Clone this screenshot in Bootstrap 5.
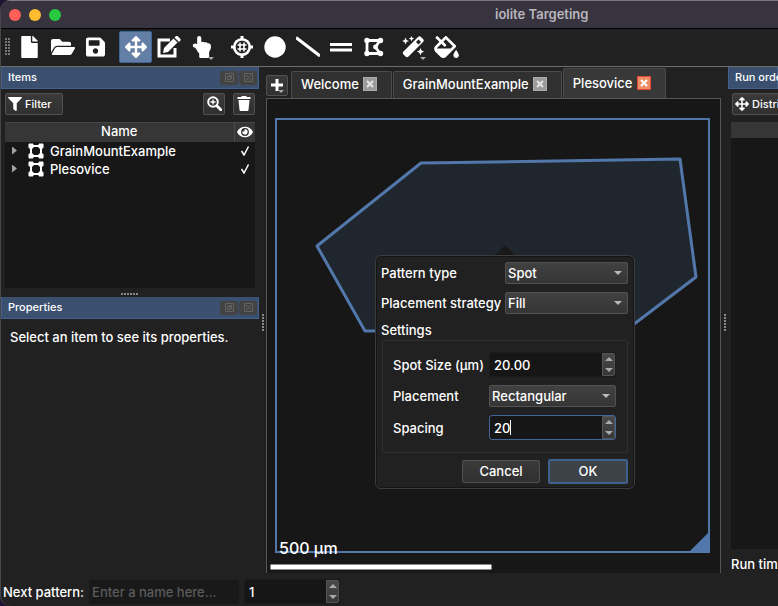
<!DOCTYPE html>
<html lang="en" data-bs-theme="dark">
<head>
<meta charset="utf-8">
<meta name="viewport" content="width=device-width, initial-scale=1">
<title>iolite Targeting</title>
<link href="https://cdn.jsdelivr.net/npm/bootstrap@5.3.0/dist/css/bootstrap.min.css" rel="stylesheet">
<style>
  :root { --face: #212121; --well: #171717; --edge: #565656; --accent: #5277aa; --dock: #3a506e; }
  html, body { height: 100%; }
  body { background: #1d1433; color: #fff; font: 500 13px/18px Inter, "Liberation Sans", sans-serif; overflow: hidden; }
  svg { display: block; flex: none; }
  main, .min-0 { min-width: 0; min-height: 0; }
  .ico { fill: #fff; }
  .window { background: var(--face); border-left: 1px solid #47474a; border-radius: 10px 0 0 10px; overflow: hidden; }
  .titlebar { height: 29px; flex: none; background: #37343f; border-top: 1px solid #7b797f; border-bottom: 1px solid #000; padding-left: 8px; }
  .titlebar h1 { font-size: 13px; font-weight: 600; color: #b9b7bd; line-height: 18px; padding: 0 0 1px 434px; margin: 0; white-space: nowrap; }
  .light { width: 12px; height: 12px; border: 0; border-radius: 50%; padding: 0; }
  .light-r { background: #ff5f57; } .light-y { background: #febc2e; } .light-g { background: #28c840; }
  .toolbar { height: 38px; flex: none; border-bottom: 1px solid #6d6d6d; padding: 0 0 2px 4px; }
  .grip { width: 6px; height: 18px; margin-right: 2px; background: radial-gradient(circle at 1px 1px, #777 1px, transparent 1px) 0 0 / 3px 3px; }
  .tool { position: relative; width: 33px; height: 32px; padding: 0; border: 1px solid transparent; border-radius: 2px; background: none; display: flex; align-items: center; justify-content: center; }
  .tool.on { background: #647fa6; border-color: #3f6699; }
  .rule { width: 7px; height: 24px; }
  .drop::after { content: ""; position: absolute; right: 3px; bottom: 2px; border: 3px solid transparent; border-top-color: #aaa; border-bottom: 0; }
  .dock-left { width: 258px; flex: none; }
  .dock-right { width: 50px; flex: none; overflow: hidden; white-space: nowrap; }
  .dock-head { height: 22px; flex: none; background: var(--dock); border: 1px solid #41608d; border-top: 0; padding: 0 1px 0 6px; gap: 1px; }
  .dock-head h2 { font-size: 11px; line-height: 18px; font-weight: 500; margin: 0; padding-bottom: 1px; }
  .dock-btn { width: 18px; height: 14px; background: #434343; border: 0; border-radius: 3px; padding: 0; display: grid; place-items: center; }
  .dock-btn svg { fill: none; stroke: #626262; }
  .dock-bar { padding: 4px 4px 7px; }
  .hint { margin: 9px 0 0 9px; }
  .face-btn { position: relative; height: 22px; background: linear-gradient(#3a3a3a, #303030); border: 1px solid #515151; border-radius: 2px; color: #fff; font-size: 11px; line-height: 18px; font-weight: 500; padding: 0 0 1px; display: flex; align-items: center; justify-content: center; gap: 3px; }
  .w-filter { width: 58px; padding-left: 2px; justify-content: flex-start; }
  .w-icon { width: 22px; }
  .w-dist { width: 80px; padding-left: 2px; justify-content: flex-start; }
  .well { background: var(--well); }
  .items { height: 166px; flex: none; }
  .items table { width: 100%; table-layout: fixed; }
  .items th { height: 19px; line-height: 17px; padding: 0 0 1px; background: #363636; font-weight: 500; text-align: center; border-right: 1px solid #4a4a4a; border-top: 1px solid #454545; }
  .items th:last-child { width: 21px; border-right: 0; }
  .items th svg { margin: auto; }
  .items td { height: 18px; line-height: 18px; padding: 0; }
  .item-icon { margin-right: 6px; }
  .twist { width: 5px; height: 8px; background: #a3a3a3; clip-path: polygon(0 0, 100% 50%, 0 100%); margin: 0 11px 0 7px; }
  .split-h { height: 9px; flex: none; padding-top: 3px; }
  .dots-h { width: 18px; height: 3px; background: radial-gradient(circle at 1px 1px, #888 1px, transparent 1px) 0 0 / 3px 3px; }
  .split-v { width: 7px; flex: none; padding: 6px 0 0 2px; }
  .dots-v { width: 3px; height: 18px; background: radial-gradient(circle at 1px 1px, #888 1px, transparent 1px) 0 0 / 3px 3px; }
  .tabs { height: 31px; flex: none; }
  .add-tab { height: 21px; margin: 0 3px 2px 0; }
  .tab { height: 27px; background: #303030; border: 1px solid #4b4b4b; border-bottom: 0; border-radius: 2px 2px 0 0; padding: 0 14px 2px 9px; margin-right: 1px; gap: 4px; }
  .tab.on { height: 30px; background: #383838; }
  .tab button.name { background: none; border: 0; color: #fff; padding: 0; font-weight: 500; }
  .shut { width: 14px; height: 14px; padding: 0; border: 1px solid #aaa; background: #9b9b9b; display: grid; place-items: center; }
  .shut svg { stroke: #e4e4e4; stroke-width: 2; }
  .tab.on .shut { background: #ee8c65; border-color: #e0492f; }
  .tab.on .shut svg { stroke: #fff; }
  .stage { position: relative; background: var(--well); border: 1px solid var(--edge); border-bottom: 0; }
  .stage > svg { width: 100%; height: 100%; }
  .popup { position: absolute; left: 108px; top: 156px; width: 260px; background: var(--face); border: 1px solid #3c3c3c; border-radius: 6px; padding: 6px 6px 4px 5px; box-shadow: inset 0 0 0 1px #141414; }
  .beak { position: absolute; left: 119px; top: -11px; width: 20px; height: 10px; background: #191919; clip-path: polygon(50% 0, 100% 100%, 0 100%); }
  .popup .form-select { height: 22px; color: #fff; font: inherit; line-height: 18px; padding: 0 20px 1px 2px; border: 1px solid #535353; border-radius: 2px; background: linear-gradient(#414141, #353535); appearance: none; }
  .pick { position: relative; }
  .pick::after { content: ""; position: absolute; right: 6px; top: 9px; border: 4px solid transparent; border-top-color: #bbb; border-bottom: 0; pointer-events: none; }
  .w-pick { width: 123px; } .w-field { width: 127px; }
  .line { height: 30px; }
  .line label { line-height: 22px; }
  .group-name { line-height: 16px; }
  .settings { border: 1px solid #303030; border-radius: 2px; padding: 11px 11px 12px 10px; margin: 2px 0 0 1px; }
  .actions { margin-top: 6px; }
  .spin { position: relative; display: flex; height: 25px; background: #161616; border: 1px solid #1b1b1b; border-radius: 3px; }
  .spin.on { border-color: #41659a; }
  .spin .form-control, .name-box { min-width: 0; border: 0; border-radius: 2px; background: transparent; color: #fff; font: inherit; padding: 1px 4px 0; }
  .spin-btns { width: 13px; flex: none; background: linear-gradient(#484848, #383838); border: 1px solid #555; border-radius: 0 2px 2px 0; display: flex; flex-direction: column; }
  .spin-btns button { flex: 1; padding: 0; border: 0; background: none; display: grid; place-items: center; }
  .spin-btns button::after { content: ""; border: 4px solid transparent; border-bottom-color: #aaa; border-top: 0; }
  .spin-btns button + button::after { border-top: 4px solid #aaa; border-bottom: 0; }
  .caret { position: absolute; left: 20px; top: 4px; width: 1px; height: 15px; background: #fff; }
  .act { height: 23px; width: 78px; font-size: 13px; }
  .act.ok { border: 2px solid #40608e; background: #3d4148; height: 25px; width: 80px; }
  .footer-row { height: 33px; flex: none; padding: 4px 0 0 2px; gap: 5px; }
  .name-box { width: 150px; height: 24px; background: #191919; padding: 0 3px; }
  .name-box::placeholder { color: #5b5b5b; }
  .w-count { width: 96px; }
  .right-well { margin-left: 3px; border-top: 16px solid #363636; }
  .run-time { padding: 6px 0 0 3px; }
</style>
<script src="https://cdn.jsdelivr.net/npm/bootstrap@5.3.0/dist/js/bootstrap.bundle.min.js"></script>
</head>
<body>
<svg width="0" height="0" class="position-absolute" aria-hidden="true">
  <defs>
    <symbol id="move" viewBox="0 0 512 512"><path d="M352.201 425.775l-79.196 79.196c-9.373 9.373-24.568 9.373-33.941 0l-79.196-79.196c-15.119-15.119-4.411-40.971 16.971-40.970h51.162L228 284H127.196v51.162c0 21.382-25.851 32.090-40.971 16.971L7.029 272.937c-9.373-9.373-9.373-24.569 0-33.941L86.225 159.800c15.119-15.119 40.971-4.411 40.971 16.971V228H228V127.196h-51.230c-21.382 0-32.090-25.851-16.971-40.971l79.196-79.196c9.373-9.373 24.568-9.373 33.941 0l79.196 79.196c15.119 15.119 4.411 40.971-16.971 40.971h-51.162V228h100.804v-51.162c0-21.382 25.851-32.090 40.970-16.971l79.196 79.196c9.373 9.373 9.373 24.569 0 33.941L425.773 352.200c-15.119 15.119-40.971 4.411-40.970-16.971V284H284v100.804h51.230c21.382 0 32.090 25.851 16.971 40.971z"/></symbol>
    <symbol id="square-poly" viewBox="0 0 16 16"><path d="M3 3h10v10H3z" fill="none" stroke="#fff" stroke-width="2"/><path d="M1 1h4v4H1zM11 1h4v4h-4zM1 11h4v4H1zM11 11h4v4h-4z" stroke="#fff" stroke-linejoin="round"/></symbol>
    <symbol id="float" viewBox="0 0 9 9"><path d="M.5 .5h8v8h-8zM2.500 3.500h3v3h-3zM3.500 2.500h3v3"/></symbol>
    <symbol id="cross" viewBox="0 0 9 9"><path d="M.5 .5h8v8h-8zM2 2l5 5M7 2l-5 5"/></symbol>
    <symbol id="x" viewBox="0 0 8 8"><path d="M1 1l6 6M7 1l-6 6"/></symbol>
  </defs>
</svg>
<div class="window d-flex flex-column vh-100">
  <header class="titlebar d-flex align-items-center">
    <div class="d-flex gap-2">
      <button class="light light-r" aria-label="Close"></button>
      <button class="light light-y" aria-label="Minimize"></button>
      <button class="light light-g" aria-label="Zoom"></button>
    </div>
    <h1>iolite Targeting</h1>
  </header>

  <div class="toolbar d-flex align-items-center" role="toolbar" aria-label="Tools">
    <span class="grip"></span>
    <button class="tool" aria-label="New"><svg class="ico" width="17" height="22" viewBox="0 0 384 512"><path d="M224 136V0H24C10.700 0 0 10.700 0 24v464c0 13.300 10.700 24 24 24h336c13.300 0 24-10.700 24-24V160H248c-13.200 0-24-10.800-24-24zm160-14.100v6.100H256V0h6.100c6.400 0 12.500 2.500 17 7l97.900 98c4.500 4.500 7 10.600 7 16.900z"/></svg></button>
    <button class="tool" aria-label="Open"><svg class="ico" width="24" height="22" viewBox="0 0 576 512"><path d="M572.694 292.093L500.270 416.248A63.997 63.997 0 0 1 444.989 448H45.025c-18.523 0-30.064-20.093-20.731-36.093l72.424-124.155A64 64 0 0 1 152 256h399.964c18.523 0 30.064 20.093 20.730 36.093zM152 224h328v-48c0-26.510-21.490-48-48-48H272l-64-64H48C21.490 64 0 85.490 0 112v278.046l69.077-118.418C86.214 242.250 117.989 224 152 224z"/></svg></button>
    <button class="tool" aria-label="Save"><svg class="ico" width="19" height="22" viewBox="0 0 448 512"><path d="M433.941 129.941l-83.882-83.882A48 48 0 0 0 316.118 32H48C21.490 32 0 53.490 0 80v352c0 26.510 21.490 48 48 48h352c26.510 0 48-21.490 48-48V163.882a48 48 0 0 0-14.059-33.941zM224 416c-35.346 0-64-28.654-64-64 0-35.346 28.654-64 64-64s64 28.654 64 64c0 35.346-28.654 64-64 64zm96-304.520V212c0 6.627-5.373 12-12 12H76c-6.627 0-12-5.373-12-12V108c0-6.627 5.373-12 12-12h228.520c3.183 0 6.235 1.264 8.485 3.515l3.480 3.480A11.996 11.996 0 0 1 320 111.480z"/></svg></button>
    <span class="rule"></span>
    <button class="tool on" aria-label="Move" aria-pressed="true"><svg class="ico" width="22" height="22"><use href="#move"/></svg></button>
    <button class="tool" aria-label="Edit"><svg class="ico" width="24" height="22" viewBox="0 0 24 22"><path d="M13 4H2v16h16v-8" fill="none" stroke="#fff" stroke-width="3"/><path d="M7 12L16.500 2.500l4 4L11 16l-5 1z"/><path d="M17.500 1.500l1-1a1.800 1.800 0 0 1 2.600 0l1.900 1.900a1.800 1.800 0 0 1 0 2.600l-1 1z"/></svg></button>
    <button class="tool drop" aria-label="Select"><svg class="ico" width="20" height="22" viewBox="0 0 448 512"><path transform="translate(10 0) scale(1.100 1)" d="M135.652 0c23.625 0 43.826 20.650 43.826 44.800v99.851c17.048-16.340 49.766-18.346 70.944 6.299 22.829-14.288 53.017-2.147 62.315 16.450C361.878 158.426 384 189.346 384 240c0 2.746-.203 13.276-.195 16 .168 61.971-31.065 76.894-38.315 123.731V480q0 32-24 32H160q-24 0-24-32v-75L106.415 371.534C93.421 342.648 57.377 276.122 29.092 264 10.897 256.203.008 242.616 0 224c-.014-34.222 35.098-57.752 66.908-44.119 8.359 3.583 16.670 8.312 24.918 14.153V44.800c0-23.450 20.543-44.800 43.826-44.800z"/></svg></button>
    <span class="rule"></span>
    <button class="tool" aria-label="Spot"><svg width="22" height="22" viewBox="0 0 22 22" fill="none" stroke="#fff"><circle cx="11" cy="11" r="7.800" stroke-width="2.600"/><path d="M11 0v4.500M11 17.500V22M0 11h4.500M17.500 11H22" stroke-width="3"/><path d="M9 6.500v9M13 6.500v9M6.500 9h9M6.500 13h9" stroke-width="1.600"/></svg></button>
    <button class="tool" aria-label="Circle"><svg class="ico" width="22" height="22" viewBox="0 0 22 22"><circle cx="11" cy="11" r="10.700"/></svg></button>
    <button class="tool" aria-label="Line"><svg width="24" height="22" viewBox="0 0 24 22" stroke="#fff" stroke-width="3"><path d="M0 1.500L24 20"/></svg></button>
    <button class="tool" aria-label="Band"><svg width="22" height="22" viewBox="0 0 22 22" stroke="#fff" stroke-width="3"><path d="M0 8.500h22M0 14h22"/></svg></button>
    <button class="tool" aria-label="Polygon"><svg class="ico" width="20" height="22" viewBox="0 0 20 22"><path d="M3 4.500h13l-4.500 6.500 4.500 6.500H3z" fill="none" stroke="#fff" stroke-width="2.800"/><circle cx="3" cy="4.500" r="2.700"/><circle cx="16.500" cy="4.500" r="2.700"/><circle cx="11.500" cy="11" r="2.400"/><circle cx="3" cy="17.500" r="2.700"/><circle cx="16.500" cy="17.500" r="2.700"/></svg></button>
    <span class="rule"></span>
    <button class="tool drop" aria-label="Magic"><svg class="ico" width="23" height="22" viewBox="0 0 23 22"><path d="M1.500 15.500L16 1q1.500-1.500 3 0l2 2q1.500 1.500 0 3L6.500 20.500q-1.500 1.500-3 0l-2-2q-1.500-1.500 0-3z"/><path d="M14 6l2.500 2.500 2.500-2.500-2.500-2.500z" fill="#212121"/><path d="M3.500 1.500l1 2.500 2.500 1L4.500 6l-1 2.500-1-2.500L0 5l2.500-1zM9.500 0l.8 1.800 1.800.8-1.800.8-.8 1.800-.8-1.800-1.800-.8 1.800-.8zM18.500 12l1.100 2.500 2.500 1.100-2.500 1.100-1.100 2.500-1.100-2.500-2.500-1.100 2.500-1.100z"/></svg></button>
    <button class="tool" aria-label="Fill"><svg class="ico" width="25" height="22" viewBox="0 0 576 512"><path d="M512 320s-64 92.650-64 128c0 35.350 28.660 64 64 64s64-28.650 64-64-64-128-64-128zm-9.370-102.940L294.940 9.370C288.690 3.120 280.500 0 272.310 0s-16.380 3.120-22.620 9.370l-81.580 81.580L81.930 4.760c-6.250-6.250-16.380-6.250-22.620 0L36.690 27.380c-6.240 6.250-6.240 16.380 0 22.620l86.190 86.180-94.760 94.760c-37.490 37.480-37.490 98.260 0 135.750l117.190 117.190c18.740 18.740 43.310 28.120 67.870 28.120 24.570 0 49.130-9.370 67.870-28.120l221.570-221.570c12.500-12.500 12.500-32.750.01-45.250zm-116.220 70.970H65.930c1.360-3.840 3.570-7.980 7.430-11.830l13.150-13.150 81.610-81.610 58.600 58.600c12.490 12.490 32.750 12.490 45.240 0s12.490-32.750 0-45.240l-58.600-58.600 58.950-58.950 162.440 162.440-48.340 48.340z"/></svg></button>
  </div>

  <main class="d-flex flex-grow-1">
    <aside class="dock-left d-flex flex-column">
      <div class="dock-head d-flex align-items-center">
        <h2 class="flex-grow-1">Items</h2>
        <button class="dock-btn" aria-label="Float items"><svg width="9" height="9"><use href="#float"/></svg></button>
        <button class="dock-btn" aria-label="Close items"><svg width="9" height="9"><use href="#cross"/></svg></button>
      </div>
      <div class="dock-bar d-flex">
        <button class="face-btn w-filter me-auto"><svg class="ico" width="14" height="14" viewBox="0 0 512 512"><path d="M487.976 0H24.028C2.710 0-8.047 25.866 7.058 40.971L192 225.941V432c0 7.831 3.821 15.170 10.237 19.662l80 55.980C298.020 518.690 320 507.493 320 487.980V225.941l184.947-184.970C520.021 25.896 509.338 0 487.976 0z"/></svg>Filter</button>
        <button class="face-btn w-icon me-2" aria-label="Zoom to item"><svg width="15" height="15" viewBox="0 0 15 15" fill="none" stroke="#fff"><circle cx="6" cy="6" r="4.800" stroke-width="2"/><path d="M9.800 9.800l4 4" stroke-width="2.800" stroke-linecap="round"/><path d="M6 3.500v5M3.500 6h5" stroke-width="1.400"/></svg></button>
        <button class="face-btn w-icon" aria-label="Delete item"><svg class="ico" width="14" height="15" viewBox="0 0 14 15"><path d="M.5 1H4l1-1h4l1 1h3.500v2H.5zM1.500 4h11l-1 10q-.1 1-1 1h-7q-.9 0-1-1z"/></svg></button>
      </div>
      <div class="items well mx-1">
        <table>
          <thead><tr><th>Name</th><th aria-label="Visible"><svg class="ico" width="16" height="14" viewBox="0 0 576 512"><path d="M572.520 241.400C518.290 135.590 410.930 64 288 64S57.680 135.640 3.480 241.410a32.350 32.350 0 0 0 0 29.190C57.710 376.410 165.070 448 288 448s230.320-71.640 284.520-177.410a32.350 32.350 0 0 0 0-29.190zM288 400a144 144 0 1 1 144-144 143.930 143.930 0 0 1-144 144zm0-240a95.310 95.310 0 0 0-25.310 3.790 47.850 47.850 0 0 1-66.900 66.900A95.780 95.780 0 1 0 288 160z"/></svg></th></tr></thead>
          <tbody>
            <tr><td><div class="d-flex align-items-center"><span class="twist"></span><svg class="ico item-icon" width="16" height="16"><use href="#square-poly"/></svg>GrainMountExample</div></td><td><svg class="m-auto" width="10" height="10" viewBox="0 0 10 10" fill="none" stroke="#fff" stroke-width="1.500"><path d="M1.500 5l2.500 4L8.500.5"/></svg></td></tr>
            <tr><td><div class="d-flex align-items-center"><span class="twist"></span><svg class="ico item-icon" width="16" height="16"><use href="#square-poly"/></svg>Plesovice</div></td><td><svg class="m-auto" width="10" height="10" viewBox="0 0 10 10" fill="none" stroke="#fff" stroke-width="1.500"><path d="M1.500 5l2.500 4L8.500.5"/></svg></td></tr>
          </tbody>
        </table>
      </div>
      <div class="split-h d-flex align-items-center justify-content-center"><span class="dots-h"></span></div>
      <div class="dock-head d-flex align-items-center">
        <h2 class="flex-grow-1">Properties</h2>
        <button class="dock-btn" aria-label="Float properties"><svg width="9" height="9"><use href="#float"/></svg></button>
        <button class="dock-btn" aria-label="Close properties"><svg width="9" height="9"><use href="#cross"/></svg></button>
      </div>
      <p class="hint text-nowrap">Select an item to see its properties.</p>
    </aside>
    <div class="split-v d-flex align-items-center justify-content-center"><span class="dots-v"></span></div>

    <section class="min-0 d-flex flex-column flex-grow-1">
      <div class="tabs d-flex align-items-end">
        <button class="face-btn drop w-icon add-tab" aria-label="Add"><svg width="14" height="14" viewBox="0 0 14 14" stroke="#fff" stroke-width="3"><path d="M7 1v12M1 7h12"/></svg></button>
        <div class="tab d-flex align-items-center"><button class="name">Welcome</button><button class="shut" aria-label="Close Welcome"><svg width="8" height="8"><use href="#x"/></svg></button></div>
        <div class="tab d-flex align-items-center"><button class="name">GrainMountExample</button><button class="shut" aria-label="Close GrainMountExample"><svg width="8" height="8"><use href="#x"/></svg></button></div>
        <div class="tab on d-flex align-items-center"><button class="name">Plesovice</button><button class="shut" aria-label="Close Plesovice"><svg width="8" height="8"><use href="#x"/></svg></button></div>
      </div>
      <div class="stage min-0 flex-grow-1">
        <svg viewBox="267 99 453 474" preserveAspectRatio="xMinYMin meet">
          <path d="M421 163L680 159 696 277 617 337 600 331H365L317 246z" fill="#20262e" stroke="#5277aa" stroke-width="3" stroke-linejoin="round"/>
          <rect x="276" y="119" width="433" height="433" fill="none" stroke="#5277aa" stroke-width="2"/>
          <path d="M710 531v22h-22z" fill="#5277aa"/>
          <rect x="270.500" y="564.500" width="221" height="5" fill="#fff"/>
          <text x="279" y="554" fill="#fff" font-size="16" font-weight="500">500 µm</text>
        </svg>
        <form class="popup" onsubmit="return false">
          <span class="beak"></span>
          <div class="line d-flex align-items-start justify-content-between"><label for="ptype">Pattern type</label><span class="pick w-pick"><select id="ptype" class="form-select"><option>Spot</option><option>Line</option></select></span></div>
          <div class="line d-flex align-items-start justify-content-between"><label for="strategy">Placement strategy</label><span class="pick w-pick"><select id="strategy" class="form-select"><option>Fill</option><option>Random</option></select></span></div>
          <div class="group-name">Settings</div>
          <div class="settings d-grid gap-2">
            <div class="d-flex align-items-center justify-content-between"><label for="size">Spot Size (µm)</label><span class="spin w-field"><input id="size" class="form-control" value="20.00"><span class="spin-btns"><button type="button" aria-label="Increase size"></button><button type="button" aria-label="Decrease size"></button></span></span></div>
            <div class="d-flex align-items-center justify-content-between"><label for="placement">Placement</label><span class="pick w-field"><select id="placement" class="form-select"><option>Rectangular</option><option>Hexagonal</option></select></span></div>
            <div class="d-flex align-items-center justify-content-between"><label for="spacing">Spacing</label><span class="spin on w-field"><input id="spacing" class="form-control" value="20"><span class="caret"></span><span class="spin-btns"><button type="button" aria-label="Increase spacing"></button><button type="button" aria-label="Decrease spacing"></button></span></span></div>
          </div>
          <div class="d-flex justify-content-end align-items-center actions"><button class="face-btn act me-2" type="button">Cancel</button><button class="face-btn act ok" type="submit">OK</button></div>
        </form>
      </div>
    </section>
    <div class="split-v d-flex align-items-center justify-content-center"><span class="dots-v"></span></div>

    <aside class="dock-right d-flex flex-column">
      <div class="dock-head d-flex align-items-center"><h2>Run order</h2></div>
      <div class="dock-bar"><button class="face-btn w-dist"><svg class="ico" width="14" height="14"><use href="#move"/></svg>Distribute</button></div>
      <div class="right-well well flex-grow-1"></div>
      <div class="run-time">Run time</div>
    </aside>
  </main>

  <footer class="footer-row d-flex align-items-center">
    <label for="next">Next pattern:</label>
    <input id="next" class="form-control name-box" placeholder="Enter a name here...">
    <span class="spin w-count"><input class="form-control" value="1" aria-label="Pattern count"><span class="spin-btns"><button type="button" aria-label="Increase count"></button><button type="button" aria-label="Decrease count"></button></span></span>
  </footer>
</div>
</body>
</html>
